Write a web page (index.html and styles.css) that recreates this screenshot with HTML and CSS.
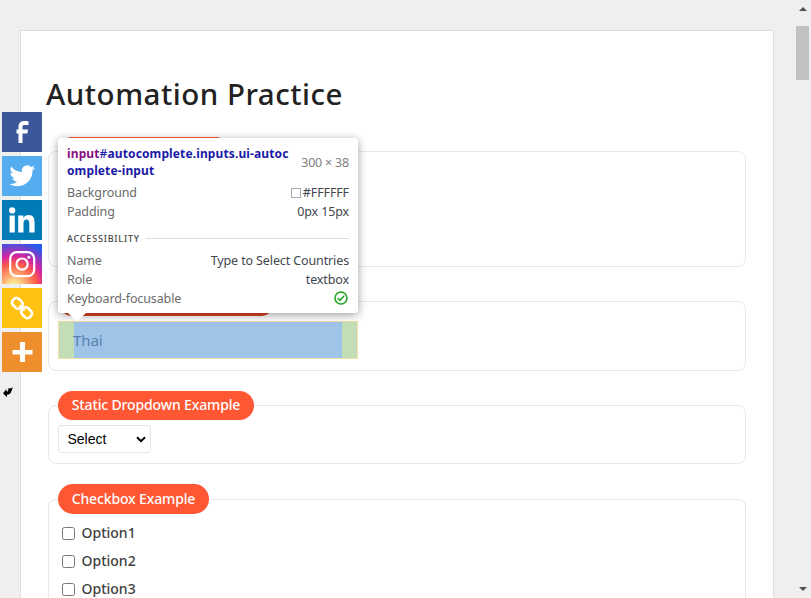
FILE: index.html
```html
<!DOCTYPE html>
<html lang="en">
<head>
<meta charset="utf-8">
<title>Automation Practice</title>
<link rel="stylesheet" href="styles.css">
</head>
<body>
<main class="card">
  <h1>Automation Practice</h1>
  <section class="group group-radio"><div class="pill pill-radio"></div></section>
  <section class="group group-suggest">
    <div class="pill pill-suggest"></div>
    <div class="suggest">Thai</div>
  </section>
  <section class="group group-dropdown">
    <h2 class="pill pill-dropdown">Static Dropdown Example</h2>
    <div class="select"><span>Select</span><svg width="10" height="7" viewBox="0 0 10 7"><path d="M1 1.2 5 5.1 9 1.2" fill="none" stroke="#000" stroke-width="2"/></svg></div>
  </section>
  <section class="group group-check">
    <h2 class="pill pill-check">Checkbox Example</h2>
    <div class="options">
      <label><input type="checkbox"><span>Option1</span></label>
      <label><input type="checkbox"><span>Option2</span></label>
      <label><input type="checkbox"><span>Option3</span></label>
    </div>
  </section>
</main>

<div class="tooltip">
  <div class="tip-head"><div class="selector"><span class="tag">input</span><span class="hash">#</span>autocomplete.inputs.ui-autoc<br>omplete-input</div><span class="size">300 × 38</span></div>
  <div class="row"><span>Background</span><span class="value"><i class="swatch"></i>#FFFFFF</span></div>
  <div class="row"><span>Padding</span><span class="value">0px 15px</span></div>
  <div class="divider"><span>ACCESSIBILITY</span></div>
  <div class="row"><span>Name</span><span class="value">Type to Select Countries</span></div>
  <div class="row"><span>Role</span><span class="value">textbox</span></div>
  <div class="row"><span>Keyboard-focusable</span><svg class="ok" width="16" height="16" viewBox="0 0 16 16" fill="none" stroke="#1ea21e" stroke-width="1.5"><circle cx="8" cy="8" r="6"/><path d="m4.8 8.2 2.1 2.1 4.3-4.6"/></svg></div>
  <svg class="arrow" width="18" height="9" viewBox="0 0 18 9"><path d="M0 0h18L9 8.5z" fill="#fff"/></svg>
</div>

<nav class="share">
  <a class="facebook"><svg viewBox="0.8 0 40 40"><path d="M21.3 31V21.5h4.9l.7-4h-5.6v-2.7c0-1.2.6-1.8 2.2-1.8h3.8V9.2c-.9-.1-2.4-.2-3.8-.2-3.9 0-6.2 1.8-6.2 5.6v2.9h-2v4h2V31z"/></svg></a>
  <a class="twitter"><svg viewBox="-3 -2.6 37.5 37.5"><path d="M28 8.56a9.9 9.9 0 0 1-2.83.77 4.93 4.93 0 0 0 2.17-2.72 9.9 9.9 0 0 1-3.13 1.19 4.92 4.92 0 0 0-8.39 4.49A13.98 13.98 0 0 1 5.67 7.15a4.93 4.93 0 0 0 1.52 6.57 4.9 4.9 0 0 1-2.23-.61v.06a4.93 4.93 0 0 0 3.95 4.83 4.9 4.9 0 0 1-2.22.08 4.93 4.93 0 0 0 4.6 3.42A9.88 9.88 0 0 1 4 23.54a13.94 13.94 0 0 0 7.55 2.21c9.06 0 14.01-7.5 14.01-14.01l-.02-.64A10 10 0 0 0 28 8.56z"/></svg></a>
  <a class="linkedin"><svg viewBox="0 0 40 40"><circle cx="10.2" cy="10.4" r="3.1"/><path d="M7.6 15.5h5.2V32.5H7.6zM16.2 15.5h5.1v2.4c1-1.8 2.8-2.9 5.1-2.9 5.2 0 6.2 3.4 6.2 8v9.5h-5.3v-8.5c0-2.5-.4-4.5-2.7-4.5-2.5 0-3.1 2-3.1 4.3v8.7h-5.3z"/></svg></a>
  <a class="instagram"><svg viewBox="0 0 40 40"><g fill="none" stroke="#fff" stroke-width="2.2"><rect x="8.2" y="8.2" width="24" height="24" rx="6.5"/><circle cx="20.1" cy="20.1" r="5.6"/></g><circle cx="26.8" cy="13.2" r="1.5"/></svg></a>
  <a class="copy"><svg viewBox="0 0 40 40"><g fill="none" stroke="#fff" stroke-width="2.6" transform="rotate(45 20 20)"><rect x="8" y="15.8" width="11" height="8.5" rx="3.5"/><rect x="21" y="15.8" width="11" height="8.5" rx="3.5"/><path d="M16.5 20h7"/></g></svg></a>
  <a class="more"><svg viewBox="0 0 40 40"><path d="M18 10h5v8h7.5v4.5H23v7.5h-5v-7.500h-7.500V18H18z"/></svg></a>
  <svg class="hide" width="12" height="12" viewBox="0 0 12 12"><path d="M1 7.2 4.5 3v2.6C6.5 5.8 6.300 3.800 6.300 2.200L7.600 2.600 11 1.400C9.400 3 10.200 8.200 5 8.800V11.200z"/></svg>
</nav>
<div class="scrollbar"><i class="up"></i><i class="thumb"></i><i class="down"></i></div>
</body>
</html>
```
FILE: styles.css
```css
* { box-sizing: border-box; }
html { overflow: hidden; }
body { margin: 0; height: 598px; overflow: hidden; display: flow-root; background: #efefef; font-family: "Noto Sans", "Open Sans", sans-serif; color: #333; }
.card { width: 754px; height: 568px; margin: 30px 0 0 20px; padding: 43px 27px 0; border: 1px solid #dedede; border-bottom: 0; background: #fff; overflow: hidden; }
h1 { margin: 0 0 0 -2px; height: 77px; font-size: 29.5px; line-height: 40px; font-weight: 500; letter-spacing: .5px; color: #222; white-space: nowrap; }
.group { width: 698px; border: 1px solid #e8e8e8; border-radius: 8px; margin-bottom: 34px; padding: 0 9px; }
.group-radio { height: 116px; }
.group-suggest { height: 70px; }
.group-dropdown { height: 59px; margin-bottom: 35px; }
.group-check { height: 99px; border-bottom: 0; border-radius: 8px 8px 0 0; }
.pill { margin: -15px 0 0; height: 29px; border-radius: 15px; background: #ff5733; color: #fff; font-size: 14px; line-height: 28px; font-weight: 500; letter-spacing: -.14px; text-align: center; white-space: nowrap; }
.pill-radio { width: 172px; }
.pill-suggest { width: 217px; background: #df4427; }
.pill-dropdown { width: 196px; }
.pill-check { width: 151px; height: 30px; margin-top: -16px; line-height: 30px; }
.suggest { width: 300px; height: 38px; margin-top: 5px; padding-left: 15px; border: 1px solid #f2dfaa; background: linear-gradient(90deg, #c3deb7 15px, #a0c4e8 15px, #a0c4e8 283px, #c3deb7 283px); color: #5683ad; font-size: 15px; line-height: 36px; letter-spacing: -.1px; text-indent: -1px; }
.select { display: flex; align-items: center; justify-content: space-between; width: 93px; height: 28px; margin-top: 5px; padding: 0 4px 0 8.5px; border: 1px solid #e5e5e5; border-radius: 3px; font: 14px "Liberation Sans", sans-serif; color: #000; }
.options { padding: 5px 0 0 4px; }
.options label { display: flex; align-items: center; height: 28px; font-size: 14px; font-weight: 500; color: #404040; }
.options span { padding-bottom: 2px; }
.options input { width: 13px; height: 13px; margin: 0 6.5px 0 0; }
.tooltip { position: absolute; left: 58px; top: 138px; width: 300px; height: 175px; padding: 7px 9px 0; border-radius: 3px; background: #fff; box-shadow: 0 2px 10px rgba(0,0,0,.38); font-size: 12.5px; line-height: 19px; letter-spacing: -.12px; color: #6b6b6b; white-space: nowrap; }
.tip-head { display: flex; justify-content: space-between; align-items: center; height: 38px; line-height: 17px; }
.selector { height: 38px; font-size: 12px; font-weight: 700; letter-spacing: .12px; color: #1a1aa6; }
.tag { color: #881280; }
.hash { font-weight: 500; }
.size { margin-top: -3px; letter-spacing: -.2px; color: #808080; }
.row { display: flex; justify-content: space-between; height: 19px; }
.value { display: flex; align-items: center; color: #42474e; }
.swatch { width: 10px; height: 10px; margin-right: 2px; border: 1px solid #aaa; }
.divider { display: flex; align-items: center; gap: 6px; height: 30px; padding-top: 4px; font-size: 9px; letter-spacing: .8px; font-weight: 500; color: #444; }
.divider::after { content: ""; flex: 1; height: 1px; background: #ddd; }
.ok { margin: 1px 0 0; }
.arrow { position: absolute; left: 10px; top: 175px; }
.share { position: absolute; left: 2px; top: 112px; width: 40px; display: flex; flex-direction: column; gap: 4px; }
.share a { height: 40px; }
.share a svg { display: block; width: 40px; height: 40px; fill: #fff; }
.facebook { background: #3c589a; }
.twitter { background: #55acee; }
.linkedin { background: #007bb6; }
.instagram { background: radial-gradient(circle at 30% 107%, #fdf497 0%, #fdf497 5%, #fd5949 45%, #d6249f 60%, #285aeb 90%); }
.copy { background: #ffc112; }
.more { background: #ef8e2d; }
.hide { margin-top: 10px; }
.scrollbar { position: absolute; right: 0; top: 0; width: 17px; height: 598px; display: flex; flex-direction: column; align-items: center; }
.up { margin-top: 7px; border: 4px solid transparent; border-top: 0; border-bottom-color: #505050; }
.thumb { width: 13px; height: 54px; margin-top: 15px; background: #c1c1c1; }
.down { margin-top: 507px; border: 4px solid transparent; border-bottom: 0; border-top-color: #505050; }
```
